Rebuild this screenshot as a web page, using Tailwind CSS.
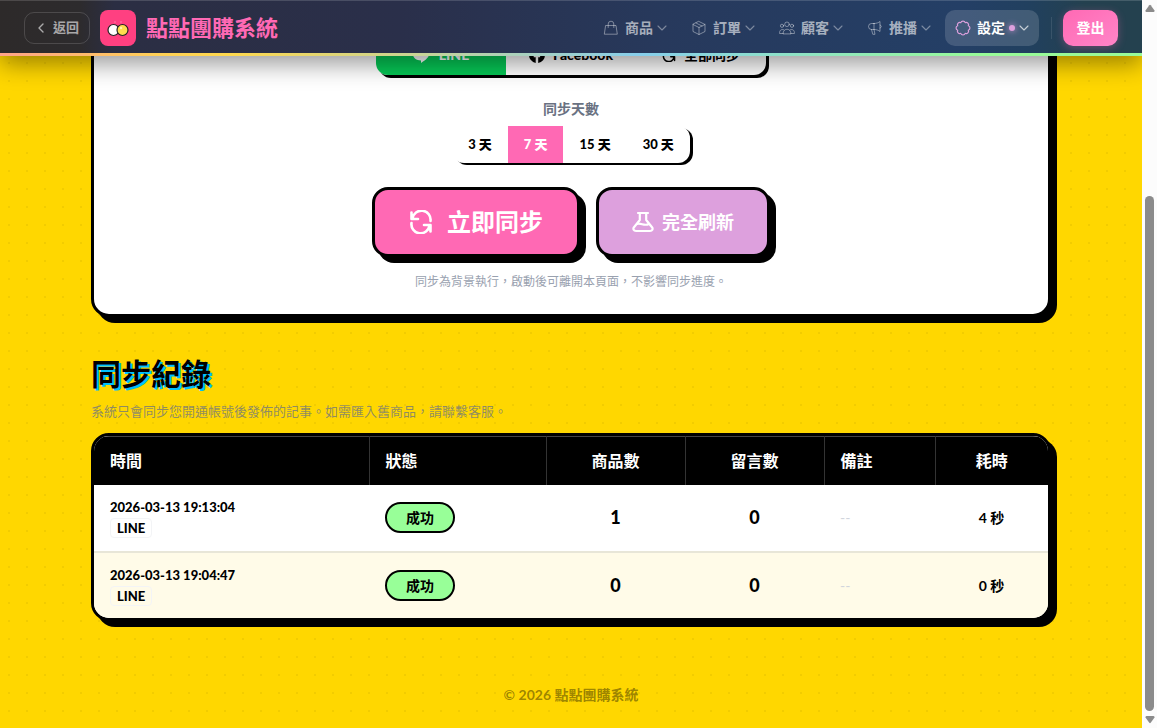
<!DOCTYPE html>
<html lang="zh-Hant">
<head>
<meta charset="utf-8">
<meta name="viewport" content="width=device-width, initial-scale=1">
<title>點點團購系統</title>
<script src="https://cdn.jsdelivr.net/npm/@tailwindcss/browser@4"></script>
</head>
<body class="flex h-screen overflow-hidden bg-[#ffd700] font-['Lato','Noto_Sans_CJK_TC',sans-serif] text-black">
<svg class="hidden" aria-hidden="true">
  <symbol id="chevron" viewBox="0 0 10 10"><path d="M1 3l4 4 4-4" fill="none" stroke="currentColor" stroke-width="1.1" stroke-linecap="round" stroke-linejoin="round"/></symbol>
  <symbol id="sync" viewBox="0 0 24 24"><path d="M2.500 2.500v6.500h6.500M3.500 8.500A9 9 0 0 1 21.500 11M21.500 21.500v-6.500h-6.500M20.500 15.500A9 9 0 0 1 2.500 13" fill="none" stroke="currentColor" stroke-width="2.600" stroke-linecap="round" stroke-linejoin="round"/></symbol>
</svg>

<div class="h-screen min-w-0 flex-1 overflow-hidden bg-[radial-gradient(circle,rgba(0,0,0,0.05)_1px,transparent_1.5px)] bg-[size:18px_18px]">
  <header class="relative z-10 shadow-[0_8px_24px_rgba(0,0,0,0.4)]">
    <div class="flex h-[53px] items-center border-t border-white/15 bg-[linear-gradient(90deg,#2d2a2a_0%,#2d2b2d_7%,#2b2e43_10%,#2a2f4a_35%,#27395c_58%,#243f66_84%,#21405f_90%,#24414f_95%)] px-6 pt-px">
      <a href="#" class="flex h-8 items-center gap-2 rounded-[10px] border border-white/15 pr-[10px] pl-[11px] text-[13px] font-bold text-white/60">
        <svg class="h-3 w-[9px]" viewBox="0 0 9 12" fill="none" stroke="currentColor" stroke-width="1.4" stroke-linecap="round" stroke-linejoin="round"><path d="M7 2L3 6l4 4"/></svg>返回</a>
      <svg class="ml-[10px] h-9 w-9 rounded-lg" viewBox="0 0 36 36" aria-hidden="true">
        <rect width="36" height="36" fill="#ff4081"/>
        <circle cx="15" cy="12" r=".8" fill="#ff80ab"/><circle cx="21" cy="12" r=".8" fill="#ff80ab"/>
        <circle cx="13.500" cy="20" r="5.500" fill="#fff" stroke="#222" stroke-width="1.200"/>
        <circle cx="22.500" cy="20" r="5.500" fill="#ffdc4e" stroke="#222" stroke-width="1.200"/>
        <circle cx="21" cy="18" r="1.200" fill="#fff3b0"/>
      </svg>
      <span class="ml-[10px] text-[22px] font-bold text-[#ff69b4]">點點團購系統</span>
      <nav class="ml-auto flex items-center gap-1 text-[14px] font-bold text-white/60">
        <button class="flex h-9 items-center gap-1 rounded-[10px] px-[10px]"><svg class="mr-[2px] h-4 w-4 text-white/40" viewBox="0 0 16 16" fill="none" stroke="currentColor" stroke-linejoin="round" stroke-linecap="round"><path d="M3 5.500h10l1.300 8.700H1.700zM5.200 7.500V4a2.800 2.800 0 0 1 5.600 0v3.500"/></svg>商品<svg class="h-[10px] w-[10px] text-white/40"><use href="#chevron"/></svg></button>
        <button class="flex h-9 items-center gap-1 rounded-[10px] px-[10px]"><svg class="mr-[2px] h-4 w-4 text-white/40" viewBox="0 0 16 16" fill="none" stroke="currentColor" stroke-linejoin="round" stroke-linecap="round"><path d="M8 1.500l6 3v7l-6 3-6-3v-7zM2 4.500l6 3 6-3M8 7.500v7M5 3l6 3"/></svg>訂單<svg class="h-[10px] w-[10px] text-white/40"><use href="#chevron"/></svg></button>
        <button class="flex h-9 items-center gap-1 rounded-[10px] px-[10px]"><svg class="mr-[2px] h-4 w-4 text-white/40" viewBox="0 0 16 16" fill="none" stroke="currentColor" stroke-linejoin="round" stroke-linecap="round"><circle cx="8" cy="4.300" r="2.300"/><circle cx="3" cy="5.800" r="1.600"/><circle cx="13" cy="5.800" r="1.600"/><path d="M4 13.500c0-5.800 8-5.800 8 0zM4 13.500H.600c-.2-3.200 1.700-4.700 4.200-3.700M12 13.500h3.400c.2-3.200-1.700-4.700-4.200-3.700"/></svg>顧客<svg class="h-[10px] w-[10px] text-white/40"><use href="#chevron"/></svg></button>
        <button class="flex h-9 items-center gap-1 rounded-[10px] px-[10px]"><svg class="mr-[2px] h-4 w-4 text-white/40" viewBox="0 0 16 16" fill="none" stroke="currentColor" stroke-linejoin="round" stroke-linecap="round"><path d="M7 3.500H4.500a3 3 0 0 0 0 6H7c2.500 0 4.500.8 6 2v-10c-1.500 1.200-3.500 2-6 2zM7 3.500v6M13 5c1.800.4 1.800 2.600 0 3M4.500 9.500l1.300 4.800h2.200L7 9.500"/></svg>推播<svg class="h-[10px] w-[10px] text-white/40"><use href="#chevron"/></svg></button>
        <button class="flex h-9 items-center gap-1 rounded-[10px] bg-white/15 px-[10px] text-white"><svg class="mr-[2px] h-4 w-4 text-[#dda0dd]" viewBox="0 0 16 16" fill="none" stroke="currentColor" stroke-width="1.200" stroke-linejoin="round" stroke-linecap="round"><path d="M13.300 5.800A2.300 2.300 0 0 1 13.300 10.200A2.300 2.300 0 0 1 10.200 13.300A2.300 2.300 0 0 1 5.800 13.300A2.300 2.300 0 0 1 2.700 10.200A2.300 2.300 0 0 1 2.700 5.800A2.300 2.300 0 0 1 5.800 2.700A2.300 2.300 0 0 1 10.200 2.700A2.300 2.300 0 0 1 13.300 5.800z"/></svg>設定<span class="h-[6px] w-[6px] rounded-full bg-[#dda0dd] shadow-[0_0_6px_#dda0dd]"></span><svg class="h-[10px] w-[10px] text-white/70"><use href="#chevron"/></svg></button>
      </nav>
      <span class="ml-3 h-[22px] w-px bg-white/10"></span>
      <button class="ml-[11px] h-9 w-[55px] rounded-[10px] bg-linear-to-br from-[#ff69b4] to-[#ff85c8] text-[14px] font-bold text-white shadow-[0_2px_8px_rgba(255,105,180,0.3)]">登出</button>
    </div>
    <div class="h-[3px] bg-[linear-gradient(90deg,#ffa38a_0%,#ffd055_14%,#ffd84d_20%,#87ceeb_56%,#98fb98_86%)]"></div>
  </header>

  <main class="mx-auto -mt-20 max-w-[960px]">
    <section class="flex flex-col items-center rounded-[18px] border-[3px] border-black bg-white pt-[58px] pb-[22px] shadow-[6px_6px_0_#000]">
      <div class="flex h-[38px] overflow-hidden rounded-xl bg-white text-[14px] font-black shadow-[3px_3px_0_#000]">
        <button class="flex w-[130px] items-center justify-center gap-[10px] bg-[#06c755] pb-[3px] text-white"><svg class="h-4 w-4" viewBox="0 0 16 16" fill="currentColor" aria-hidden="true"><path d="M8 1c4.400 0 8 2.800 8 6.300 0 3-3.200 5.600-8 8.700v-2.500c-4.600 0-8-2.700-8-6.200S3.600 1 8 1z"/></svg>LINE</button>
        <button class="flex w-[130px] items-center justify-center gap-2 pb-[3px]"><svg class="h-4 w-4" viewBox="0 0 16 16" fill="currentColor" aria-hidden="true"><path d="M16 8a8 8 0 1 0-9.300 7.900v-5.600h-2V8h2V6.200c0-2 1.200-3.100 3-3.100l1.800.2v2h-1c-1 0-1.300.6-1.300 1.200V8h2.200l-.4 2.300H9.200v5.600A8 8 0 0 0 16 8z"/></svg>Facebook</button>
        <button class="flex w-[130px] items-center justify-center gap-2 pb-[3px] font-bold"><svg class="h-[14px] w-[14px]" aria-hidden="true"><use href="#sync"/></svg>全部同步</button>
      </div>
      <p class="mt-6 text-[14px] leading-5 font-bold text-gray-500">同步天數</p>
      <div class="mt-[7px] flex h-[37px] overflow-hidden rounded-xl bg-white text-[13px] font-black shadow-[3px_2px_0_#000]">
        <button class="px-4">3 天</button>
        <button class="bg-[#ff69b4] px-4 text-white">7 天</button>
        <button class="px-4">15 天</button>
        <button class="px-4">30 天</button>
      </div>
      <div class="mt-6 flex gap-4 font-bold text-white">
        <button class="flex h-[70px] items-center gap-[14px] rounded-2xl border-[3px] border-black bg-[#ff69b4] px-[34px] text-[24px] shadow-[6px_6px_0_#000]"><svg class="h-6 w-6" aria-hidden="true"><use href="#sync"/></svg>立即同步</button>
        <button class="flex h-[70px] items-center gap-2 rounded-2xl border-[3px] border-black bg-[#dda0dd] px-[33px] text-[18px] shadow-[6px_6px_0_#000]"><svg class="h-[22px] w-[22px]" viewBox="0 0 22 22" fill="none" stroke="currentColor" stroke-width="2.200" stroke-linecap="round" stroke-linejoin="round" aria-hidden="true"><path d="M6 2h10M7.800 2v7L2 16.200C.7 18 1.700 20 4 20h14c2.300 0 3.300-2 2-3.800L14.200 9V2M5 13c4-1.500 7 2.500 12 0"/></svg>完全刷新</button>
      </div>
      <p class="mt-[15px] text-[12px] leading-5 text-gray-400">同步為背景執行，啟動後可離開本頁面，不影響同步進度。</p>
    </section>

    <h1 class="mt-[38px] text-[30px] leading-9 font-bold [text-shadow:2px_2px_0_#00bfff]">同步紀錄</h1>
    <p class="mt-[10px] text-[13px] leading-5 text-gray-500/75">系統只會同步您開通帳號後發佈的記事。如需匯入舊商品，請聯繫客服。</p>

    <div class="mt-3 overflow-hidden rounded-[18px] border-[3px] border-black bg-white shadow-[6px_6px_0_#000]">
      <table class="w-full table-fixed border-collapse text-center text-[14px] font-bold">
        <colgroup><col class="w-[275px]"><col class="w-[177px]"><col class="w-[139px]"><col class="w-[139px]"><col class="w-[111px]"><col></colgroup>
        <thead class="bg-black text-[16px] text-white">
          <tr class="h-12 divide-x divide-[#333] border-t border-[#444]">
            <th class="px-4 text-left">時間</th><th class="px-4 text-left">狀態</th><th>商品數</th><th>留言數</th><th class="px-4 text-left">備註</th><th>耗時</th>
          </tr>
        </thead>
        <tbody>
          <tr class="h-[67px] border-b-2 border-[#e8e6d8]">
            <td class="px-4 text-left"><div class="text-[13px] leading-5 font-black">2026-03-13 19:13:04</div><span class="inline-block rounded border border-gray-100 px-[6px] text-[13px] leading-[18px] font-black">LINE</span></td>
            <td class="px-4 text-left"><span class="inline-block rounded-full border-2 border-black bg-[#98ff98] px-[19px] leading-[27px]">成功</span></td>
            <td class="text-[18px] font-black">1</td><td class="text-[18px] font-black">0</td>
            <td class="px-4 text-left font-normal text-gray-300">--</td><td>4 秒</td>
          </tr>
          <tr class="h-[66px] bg-[#fffbe8]">
            <td class="px-4 text-left"><div class="text-[13px] leading-5 font-black">2026-03-13 19:04:47</div><span class="inline-block rounded border border-gray-100 px-[6px] text-[13px] leading-[18px] font-black">LINE</span></td>
            <td class="px-4 text-left"><span class="inline-block rounded-full border-2 border-black bg-[#98ff98] px-[19px] leading-[27px]">成功</span></td>
            <td class="text-[18px] font-black">0</td><td class="text-[18px] font-black">0</td>
            <td class="px-4 text-left font-normal text-gray-300">--</td><td>0 秒</td>
          </tr>
        </tbody>
      </table>
    </div>
  </main>
  <footer class="mt-16 text-center text-[14px] leading-5 font-bold text-black/40">© 2026 點點團購系統</footer>
</div>

<div class="flex h-screen w-[15px] shrink-0 flex-col items-center bg-[#fcfcfc] py-[4px] text-[#8b8b8b]" aria-hidden="true">
  <svg class="h-2 w-[10px] shrink-0" viewBox="0 0 10 8" fill="currentColor"><path d="M4.300 1.200Q5 .4 5.700 1.200L9.500 6.500Q9.800 8 8.500 8h-7Q.2 8 .5 6.500z"/></svg>
  <div class="flex-[184]"></div>
  <div class="w-[9px] flex-[515] rounded-full bg-[#8b8b8b]"></div>
  <div class="flex-[5]"></div>
  <svg class="h-2 w-[10px] shrink-0" viewBox="0 0 10 8" fill="currentColor"><path d="M4.300 6.800Q5 7.600 5.700 6.800L9.500 1.500Q9.800 0 8.500 0h-7Q.2 0 .5 1.500z"/></svg>
</div>
</body>
</html>
